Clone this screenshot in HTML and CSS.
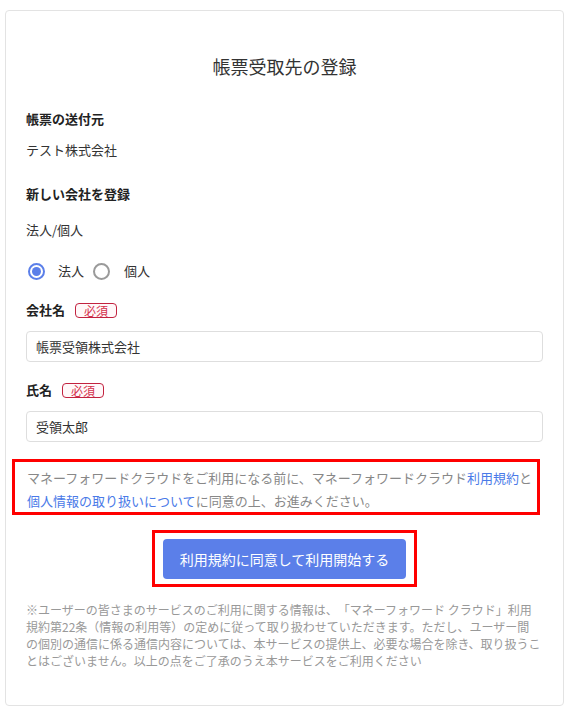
FILE: index.html
```html
<!doctype html>
<html>
<head>
  <meta charset="utf-8">
  <link rel="stylesheet" href="styles.css">
</head>
<body>
  <div class="card">
    <h1 class="title">帳票受取先の登録</h1>

    <h2 class="label">帳票の送付元</h2>
    <p class="value">テスト株式会社</p>

    <h2 class="label label-new">新しい会社を登録</h2>
    <p class="value value-kind">法人/個人</p>

    <div class="radios">
      <label class="radio"><input type="radio" name="kind" checked> 法人</label>
      <label class="radio"><input type="radio" name="kind"> 個人</label>
    </div>

    <div class="field">
      <div class="field-label">会社名 <span class="required">必須</span></div>
      <input class="text-input" type="text" value="帳票受領株式会社">
    </div>

    <div class="field">
      <div class="field-label">氏名 <span class="required">必須</span></div>
      <input class="text-input" type="text" value="受領太郎">
    </div>

    <div class="agree">
      マネーフォワードクラウドをご利用になる前に、マネーフォワードクラウド<a href="#">利用規約</a>と<a href="#">個人情報の取り扱いについて</a>に同意の上、お進みください。
    </div>

    <div class="submit-row">
      <div class="submit-box">
        <button class="submit">利用規約に同意して利用開始する</button>
      </div>
    </div>

    <p class="note">※ユーザーの皆さまのサービスのご利用に関する情報は、「マネーフォワード クラウド」利用規約第22条（情報の利用等）の定めに従って取り扱わせていただきます。ただし、ユーザー間<br>の個別の通信に係る通信内容については、本サービスの提供上、必要な場合を除き、取り扱うことはございません。以上の点をご了承のうえ本サービスをご利用ください</p>
  </div>
</body>
</html>
```

FILE: styles.css
```css
body{
  margin: 0;
  padding: 10px 10px 10px 5px;
  font-family: "Noto Sans CJK JP", "Noto Sans", sans-serif;
  font-size: 13px;
  color: #333;
  background: #fff;
  text-spacing-trim: space-all;
}
.card{
  border: 1px solid #e3e3e3;
  border-radius: 4px;
  padding: 42px 20px 36px;
}
.title{
  font-size: 18px;
  font-weight: normal;
  line-height: 26px;
  text-align: center;
  margin: 0 0 30px;
  color: #333;
}
.label{
  font-size: 13px;
  font-weight: bold;
  line-height: 20px;
  margin: 0;
  color: #222;
}
.label-new{
  margin-top: 24px;
}
.value{
  line-height: 20px;
  margin: 11px 0 0;
}
.value-kind{
  margin-top: 16px;
}
.radios{
  display: flex;
  align-items: center;
  height: 20px;
  margin-top: 21px;
  padding-left: 2px;
}
.radio{
  display: flex;
  align-items: center;
  gap: 13px;
  margin-right: 9px;
  line-height: 20px;
}
.radio + .radio{
  gap: 14px;
}
.radio input{
  appearance: none;
  -webkit-appearance: none;
  width: 17px;
  height: 17px;
  margin: 0;
  border: 2px solid #9a9a9a;
  border-radius: 50%;
  background: #fff;
  display: grid;
  place-items: center;
}
.radio input:checked{
  border-color: #5b7fe9;
}
.radio input:checked::after{
  content: "";
  width: 9px;
  height: 9px;
  border-radius: 50%;
  background: #5b7fe9;
}
.field{
  margin-top: 19px;
}
.field + .field{
  margin-top: 18px;
}
.field-label{
  display: flex;
  align-items: center;
  gap: 10px;
  font-weight: bold;
  line-height: 20px;
  color: #222;
}
.required{
  display: inline-block;
  font-size: 12px;
  font-weight: normal;
  line-height: 13px;
  padding: 0 8px;
  border: 1px solid #c2223f;
  border-radius: 4px;
  color: #d4304c;
  background: #fff8f9;
}
.text-input{
  display: block;
  box-sizing: border-box;
  width: 100%;
  height: 31px;
  margin-top: 11px;
  padding: 0 9px;
  border: 1px solid #dedede;
  border-radius: 4px;
  font-family: inherit;
  font-size: 13px;
  color: #333;
  outline: none;
}
.agree{
  margin: 17px 3px 0 -14px;
  padding: 4px 1px 0 12px;
  border: 3px solid #ff0000;
  line-height: 23px;
  color: #888;
}
.agree a{
  color: #4a7ae8;
  text-decoration: none;
}
.submit-row{
  display: flex;
  justify-content: center;
  margin-top: 15px;
}
.submit-box{
  border: 3px solid #ff0000;
  padding: 6px 8px 5px;
}
.submit{
  display: block;
  height: 40px;
  padding: 0 17px;
  border: none;
  border-radius: 4px;
  background: #5b7fe9;
  color: #fff;
  font-family: inherit;
  font-size: 14px;
  cursor: pointer;
}
.note{
  margin: 14px 0 0;
  padding-right: 0.5px;
  font-size: 12px;
  line-height: 17px;
  color: #999;
}
```
